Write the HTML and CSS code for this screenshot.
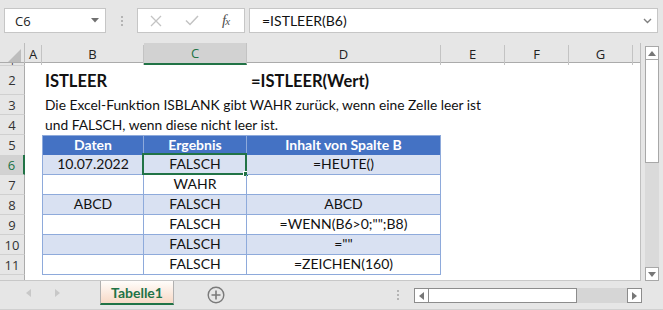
FILE: index.html
```html
<!DOCTYPE html>
<html lang="de">
<head>
<meta charset="utf-8">
<title>ISTLEER</title>
<link rel="stylesheet" href="styles.css">
</head>
<body>
<div class="app">
  <div class="toolbar">
    <div class="namebox">
      <span>C6</span>
      <svg class="nb-arrow" width="8" height="5" viewBox="0 0 8 5"><path d="M0 0h8L4 4.5z" fill="#707070"/></svg>
    </div>
    <div class="vdots"><i></i><i></i><i></i></div>
    <div class="fxbox">
      <svg class="ic-x" width="12" height="12" viewBox="0 0 12 12"><path d="M1 1l10 10M11 1L1 11" stroke="#c3c3c3" stroke-width="1.3" fill="none"/></svg>
      <svg class="ic-check" width="14" height="11" viewBox="0 0 14 11"><path d="M1 5.5l4 4L13 1" stroke="#c3c3c3" stroke-width="1.5" fill="none"/></svg>
      <span class="fx">f<small>x</small></span>
    </div>
    <div class="formula">
      <span>=ISTLEER(B6)</span>
      <svg width="9" height="6" viewBox="0 0 9 6"><path d="M1 1l3.5 3.5L8 1" stroke="#808080" stroke-width="1.4" fill="none"/></svg>
    </div>
  </div>

  <div class="main">
    <div class="sheet">
      <div class="row hdr">
        <div class="corner"><svg width="13" height="13" viewBox="0 0 13 13"><path d="M13 0V13H0z" fill="#bdbdbd"/></svg></div>
        <div class="ch">A</div>
        <div class="ch">B</div>
        <div class="ch sel">C</div>
        <div class="ch">D</div>
        <div class="ch">E</div>
        <div class="ch">F</div>
        <div class="ch">G</div>
        <div class="ch last"></div>
      </div>
      <div class="row r1">
        <div class="rh"><span>1</span></div>
      </div>
      <div class="row r2">
        <div class="rh">2</div>
        <div class="c"></div>
        <div class="c title">ISTLEER</div>
        <div class="c"></div>
        <div class="c title">=ISTLEER(Wert)</div>
      </div>
      <div class="row">
        <div class="rh">3</div>
        <div class="c"></div>
        <div class="c text">Die Excel-Funktion ISBLANK gibt WAHR zurück, wenn eine Zelle leer ist</div>
      </div>
      <div class="row">
        <div class="rh">4</div>
        <div class="c"></div>
        <div class="c text">und FALSCH, wenn diese nicht leer ist.</div>
      </div>
      <div class="row">
        <div class="rh">5</div>
        <div class="c"></div>
        <div class="c t th first">Daten</div>
        <div class="c t th">Ergebnis</div>
        <div class="c t th">Inhalt von Spalte B</div>
      </div>
      <div class="row">
        <div class="rh sel">6</div>
        <div class="c"></div>
        <div class="c t band first">10.07.2022</div>
        <div class="c t band active">FALSCH<span class="selbox"><i></i></span></div>
        <div class="c t band">=HEUTE()</div>
      </div>
      <div class="row">
        <div class="rh">7</div>
        <div class="c"></div>
        <div class="c t first"></div>
        <div class="c t">WAHR</div>
        <div class="c t"></div>
      </div>
      <div class="row">
        <div class="rh">8</div>
        <div class="c"></div>
        <div class="c t band first">ABCD</div>
        <div class="c t band">FALSCH</div>
        <div class="c t band">ABCD</div>
      </div>
      <div class="row">
        <div class="rh">9</div>
        <div class="c"></div>
        <div class="c t first"></div>
        <div class="c t">FALSCH</div>
        <div class="c t">=WENN(B6&gt;0;"";B8)</div>
      </div>
      <div class="row">
        <div class="rh">10</div>
        <div class="c"></div>
        <div class="c t band first"></div>
        <div class="c t band">FALSCH</div>
        <div class="c t band">=""</div>
      </div>
      <div class="row">
        <div class="rh">11</div>
        <div class="c"></div>
        <div class="c t first"></div>
        <div class="c t">FALSCH</div>
        <div class="c t">=ZEICHEN(160)</div>
      </div>
      <div class="row r12">
        <div class="rh"></div>
      </div>
    </div>
    <div class="vscroll">
      <div class="sbtn"><svg width="8" height="5" viewBox="0 0 8 5"><path d="M0 5h8L4 0z" fill="#777"/></svg></div>
      <div class="vthumb"></div>
      <div class="vtrack"></div>
      <div class="sbtn"><svg width="8" height="5" viewBox="0 0 8 5"><path d="M0 0h8L4 5z" fill="#777"/></svg></div>
    </div>
  </div>

  <div class="bottom">
    <div class="nav">
      <svg width="5" height="8" viewBox="0 0 5 8"><path d="M5 0v8L0 4z" fill="#c8c8c8"/></svg>
      <svg width="5" height="8" viewBox="0 0 5 8"><path d="M0 0v8L5 4z" fill="#c8c8c8"/></svg>
    </div>
    <div class="tab">Tabelle1</div>
    <div class="addsheet">
      <svg width="18" height="18" viewBox="0 0 18 18"><circle cx="9" cy="9" r="7.8" stroke="#7a7a7a" stroke-width="1.4" fill="none"/><path d="M9 4.5v9M4.5 9h9" stroke="#7a7a7a" stroke-width="1.6"/></svg>
    </div>
    <div class="hdots"><i></i><i></i><i></i></div>
    <div class="hscroll">
      <div class="hbtn"><svg width="5" height="8" viewBox="0 0 5 8"><path d="M5 0v8L0 4z" fill="#777"/></svg></div>
      <div class="hthumb"></div>
      <div class="htrack"></div>
      <div class="hbtn"><svg width="5" height="8" viewBox="0 0 5 8"><path d="M0 0v8L5 4z" fill="#777"/></svg></div>
    </div>
  </div>
</div>
</body>
</html>
```

FILE: styles.css
```css
* { box-sizing: border-box; }

body {
  margin: 0;
  background: #e6e6e6;
  font-family: "Lato", "Liberation Sans", sans-serif;
}

.app {
  width: 663px;
  height: 310px;
  overflow: hidden;
  display: flex;
  flex-direction: column;
  background: #e6e6e6;
}

/* ---------- formula toolbar ---------- */
.toolbar {
  height: 43px;
  flex: none;
  display: flex;
  align-items: flex-start;
  padding-top: 8px;
}

.namebox {
  margin-left: 4px;
  width: 102px;
  height: 25px;
  background: #fff;
  border: 1px solid #c6c6c6;
  display: flex;
  align-items: center;
  justify-content: space-between;
  padding: 0 6px 0 10px;
  font-family: "Open Sans", sans-serif;
  font-size: 13px;
  color: #222;
}

.vdots {
  width: 31px;
  height: 25px;
  display: flex;
  flex-direction: column;
  align-items: center;
  justify-content: center;
  gap: 2px;
}
.vdots i, .hdots i {
  display: block;
  width: 2px;
  height: 2px;
  background: #b4b4b4;
}

.fxbox {
  width: 108px;
  height: 25px;
  background: #fff;
  border: 1px solid #c6c6c6;
  display: flex;
  align-items: center;
  padding-left: 12px;
}
.ic-x { margin-right: 23px; }
.ic-check { margin-right: 23px; }
.fx {
  font-family: "Liberation Serif", serif;
  font-style: italic;
  font-size: 15px;
  color: #505050;
  letter-spacing: -1px;
}
.fx small { font-size: 11px; }

.formula {
  margin-left: 4px;
  width: 409px;
  height: 25px;
  background: #fff;
  border: 1px solid #c6c6c6;
  display: flex;
  align-items: center;
  justify-content: space-between;
  padding: 0 5px 0 12px;
  font-family: "Lato", sans-serif;
  font-size: 14px;
  color: #111;
}

/* ---------- sheet ---------- */
.main {
  height: 238px;
  flex: none;
  display: flex;
}

.sheet {
  width: 641px;
  height: 238px;
  background: #fff;
  border-right: 1px solid #bfbfbf;
  border-bottom: 1px solid #c8c8c8;
  overflow: hidden;
}

.row {
  display: grid;
  grid-template-columns: 25px 17px 102px 103px 194px 64px 64px 64px 7px;
  height: 20px;
}

.hdr {
  background: #e6e6e6;
  border-bottom: 1px solid #ababab;
}
.corner {
  display: flex;
  align-items: flex-end;
  justify-content: flex-end;
  padding: 0 3px 3px 0;
  border-right: 1px solid #bdbdbd;
}
.ch {
  display: flex;
  align-items: center;
  justify-content: center;
  font-family: "Open Sans", sans-serif;
  font-size: 13px;
  color: #222;
  border-right: 1px solid #c3c3c3;
  margin-top: 2px;
  padding-bottom: 2px;
}
.ch.last { border-right: none; }
.ch.sel {
  background: #d2d2d2;
  color: #217346;
  border-bottom: 2px solid #217346;
  margin-top: 0;
  padding-bottom: 0;
}

.rh {
  background: #e6e6e6;
  border-right: 1px solid #ababab;
  border-bottom: 1px solid #d0d0d0;
  display: flex;
  align-items: center;
  justify-content: center;
  font-family: "Open Sans", sans-serif;
  font-size: 13px;
  color: #333;
}
.rh.sel {
  background: #d2d2d2;
  color: #217346;
  border-right: 2px solid #217346;
}

.r1 { height: 3px; }
.r1 .rh { overflow: hidden; line-height: 3px; font-size: 10px; }
.r2 { height: 29px; }
.r12 { height: 5px; }
.r12 .rh { border-bottom: none; }

.c {
  position: relative;
  white-space: nowrap;
  font-size: 14px;
  color: #111;
  display: flex;
  align-items: flex-end;
  padding-left: 3px;
  padding-bottom: 2px;
}

.title {
  font-weight: 700;
  font-size: 16.5px;
  padding-bottom: 4px;
}
.r2 .c:nth-child(5) { padding-left: 4px; }

.text {
  font-size: 13.8px;
}

.t {
  justify-content: center;
  padding-left: 0;
  border-right: 1px solid #8eaadb;
  border-bottom: 1px solid #8eaadb;
}
.t.first { border-left: 1px solid #8eaadb; }
.th {
  background: #4472c4;
  color: #fff;
  font-weight: 700;
  border-top: 1px solid #8eaadb;
}
.band { background: #d9e1f2; }

.selbox {
  position: absolute;
  left: -2px;
  top: -2px;
  right: -1px;
  bottom: -1px;
  border: 2px solid #217346;
}
.selbox i {
  position: absolute;
  right: -4px;
  bottom: -4px;
  width: 6px;
  height: 6px;
  background: #217346;
  border: 1px solid #fff;
}

/* ---------- vertical scrollbar ---------- */
.vscroll {
  width: 22px;
  padding: 3px 0 0 4px;
  display: flex;
  flex-direction: column;
}
.sbtn {
  width: 14px;
  height: 14px;
  background: #fff;
  border: 1px solid #a8a8a8;
  display: flex;
  align-items: center;
  justify-content: center;
  flex: none;
}
.vthumb {
  width: 14px;
  height: 103px;
  background: #fff;
  border: 1px solid #a8a8a8;
  border-top: none;
  flex: none;
}
.vtrack {
  width: 14px;
  flex: 1;
  background: #dadada;
}

/* ---------- bottom bar ---------- */
.bottom {
  height: 29px;
  flex: none;
  display: flex;
  align-items: flex-start;
  border-bottom: 1px solid #d0d0d0;
}
.nav {
  width: 100px;
  height: 24px;
  display: flex;
  align-items: center;
  gap: 24px;
  padding-left: 26px;
}
.tab {
  width: 74px;
  height: 24px;
  background: linear-gradient(#fffdfb, #f7d9c6);
  border: 1px solid #b0b0b0;
  border-top: none;
  border-bottom: 2px solid #217346;
  display: flex;
  align-items: center;
  justify-content: center;
  font-weight: 700;
  font-size: 14px;
  color: #217346;
  padding-top: 1px;
}
.addsheet {
  width: 84px;
  height: 28px;
  display: flex;
  align-items: center;
  justify-content: center;
}
.hdots {
  width: 156px;
  height: 28px;
  display: flex;
  flex-direction: column;
  align-items: flex-end;
  justify-content: center;
  gap: 2px;
  padding-right: 15px;
}
.hscroll {
  margin-top: 7px;
  width: 228px;
  height: 15px;
  display: flex;
}
.hbtn {
  width: 15px;
  height: 15px;
  background: #fff;
  border: 1px solid #8c8c8c;
  display: flex;
  align-items: center;
  justify-content: center;
  flex: none;
}
.hthumb {
  width: 148px;
  height: 15px;
  background: #fff;
  border: 1px solid #8c8c8c;
  border-left: none;
  flex: none;
}
.htrack {
  flex: 1;
  background: #d6d6d6;
}
```
